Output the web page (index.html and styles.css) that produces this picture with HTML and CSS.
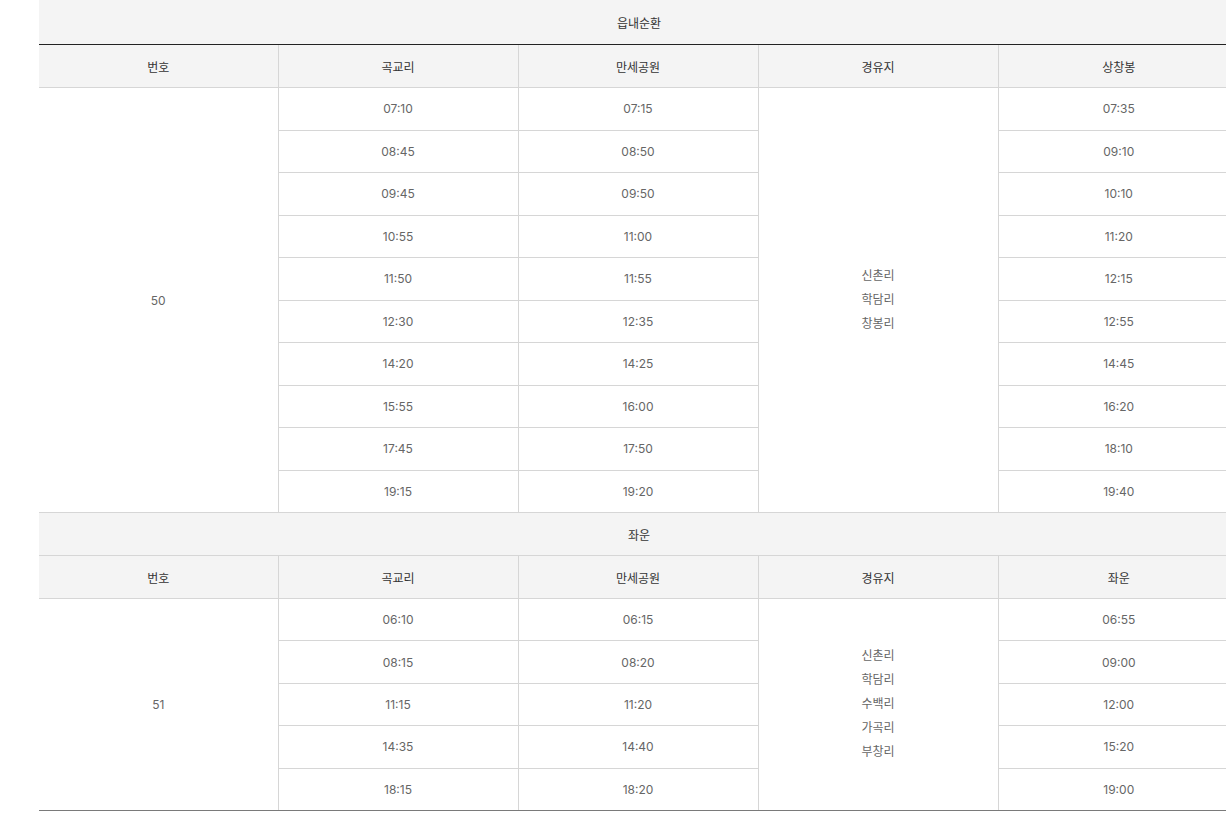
FILE: index.html
```html
<!DOCTYPE html>
<html lang="ko">
<head>
<meta charset="utf-8">
<title>버스 시간표</title>
<link rel="stylesheet" href="styles.css">
</head>
<body>
<div class="wrap">
<table class="timetable">
  <colgroup>
    <col class="c1"><col class="c"><col class="c"><col class="c"><col class="c5">
  </colgroup>
  <tbody>
    <tr class="route first"><th colspan="5">읍내순환</th></tr>
    <tr class="head">
      <th class="no">번호</th><th>곡교리</th><th>만세공원</th><th>경유지</th><th>상창봉</th>
    </tr>
    <tr class="r1"><td rowspan="10" class="no">50</td><td>07:10</td><td>07:15</td>
      <td rowspan="10" class="via"><span>신촌리</span><span>학담리</span><span>창봉리</span></td><td>07:35</td></tr>
    <tr class="r1"><td>08:45</td><td>08:50</td><td>09:10</td></tr>
    <tr class="r1"><td>09:45</td><td>09:50</td><td>10:10</td></tr>
    <tr class="r1"><td>10:55</td><td>11:00</td><td>11:20</td></tr>
    <tr class="r1"><td>11:50</td><td>11:55</td><td>12:15</td></tr>
    <tr class="r1"><td>12:30</td><td>12:35</td><td>12:55</td></tr>
    <tr class="r1"><td>14:20</td><td>14:25</td><td>14:45</td></tr>
    <tr class="r1"><td>15:55</td><td>16:00</td><td>16:20</td></tr>
    <tr class="r1"><td>17:45</td><td>17:50</td><td>18:10</td></tr>
    <tr class="r1"><td>19:15</td><td>19:20</td><td>19:40</td></tr>

    <tr class="route"><th colspan="5">좌운</th></tr>
    <tr class="head">
      <th class="no">번호</th><th>곡교리</th><th>만세공원</th><th>경유지</th><th>좌운</th>
    </tr>
    <tr class="r2"><td rowspan="5" class="no end">51</td><td>06:10</td><td>06:15</td>
      <td rowspan="5" class="via end"><span>신촌리</span><span>학담리</span><span>수백리</span><span>가곡리</span><span>부창리</span></td><td>06:55</td></tr>
    <tr class="r2"><td>08:15</td><td>08:20</td><td>09:00</td></tr>
    <tr class="r2"><td>11:15</td><td>11:20</td><td>12:00</td></tr>
    <tr class="r2"><td>14:35</td><td>14:40</td><td>15:20</td></tr>
    <tr class="r2 last"><td>18:15</td><td>18:20</td><td>19:00</td></tr>
  </tbody>
</table>
</div>
</body>
</html>
```

FILE: styles.css
```css
html, body {
  margin: 0;
  padding: 0;
  overflow: hidden;
  background: #fff;
}

body {
  font-family: Inter, "Noto Sans CJK KR", sans-serif;
  font-size: 12px;
  color: #666;
}

.wrap {
  padding-left: 39px;
  width: 1200px;
}

.timetable {
  width: 1200px;
  table-layout: fixed;
  border-collapse: collapse;
  border-spacing: 0;
}

.timetable .c1 {
  width: 239px;
}

.timetable .c {
  width: 240px;
}

.timetable .c5 {
  width: 241px;
}

.timetable th,
.timetable td {
  padding: 0;
  text-align: center;
  vertical-align: middle;
  font-weight: 400;
  border-left: 1px solid #d6d6d6;
  border-bottom: 1px solid #d6d6d6;
}

.timetable .route th,
.timetable .no {
  border-left: none;
}

.route th {
  background: #f4f4f4;
  color: #333;
  height: 42px;
}

.route.first th {
  height: 44px;
  border-bottom: 1px solid #222;
}

.head th {
  background: #f4f4f4;
  color: #333;
  height: 42px;
}

.r1 td {
  height: 41.5px;
  color: #666;
}

.r2 td {
  height: 41.4px;
  color: #666;
}

.timetable tr > td[rowspan] {
  height: auto;
}

.via span {
  display: block;
  line-height: 24px;
}

.timetable .last td,
.timetable td.end {
  border-bottom: 1px solid #7a7a7a;
}
```
